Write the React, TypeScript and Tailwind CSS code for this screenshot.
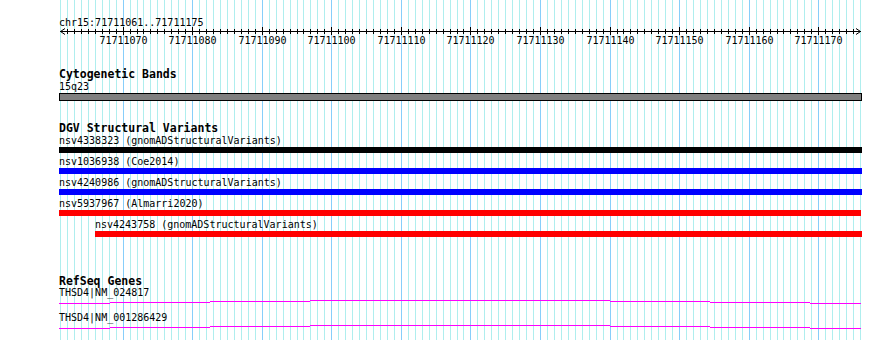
import React from "react";

const GX = (i: number) => Math.round(60 + (i * 800) / 115);

const mono = "font-['DejaVu_Sans_Mono',monospace]";

function Grid() {
  return (
    <svg className="absolute inset-0" width={890} height={340} shapeRendering="crispEdges">
      {Array.from({ length: 116 }, (_, i) => (
        <rect key={i} x={GX(i)} y={0} width={1} height={340} fill={i % 10 === 9 ? "#87cefa" : "#afeeee"} />
      ))}
    </svg>
  );
}

function Ruler() {
  const labels = [];
  for (let i = 9; i <= 115; i += 10) labels.push(i);
  return (
    <svg width={890} height={22} className="block">
      <g shapeRendering="crispEdges">
        <rect x={60} y={5} width={801} height={1} fill="#000" />
        {Array.from({ length: 114 }, (_, k) => k + 1).map((i) =>
          i % 10 === 9 ? (
            <rect key={i} x={GX(i)} y={1} width={1} height={8} fill="#000" />
          ) : (
            <rect key={i} x={GX(i)} y={3} width={1} height={5} fill="#000" />
          )
        )}
      </g>
      <polyline points="65,2.5 60.5,5.5 65,8.5" fill="none" stroke="#000" strokeWidth={1} />
      <polyline points="856,2.5 860.5,5.5 856,8.5" fill="none" stroke="#000" strokeWidth={1} />
      {labels.map((i) => (
        <text
          key={i}
          x={GX(i) + 0.5}
          y={17.5}
          textAnchor="middle"
          fontFamily="DejaVu Sans Mono, monospace"
          fontSize={10}
          fill="#000"
        >
          {71711061 + i}
        </text>
      ))}
    </svg>
  );
}

function Gene({ h }: { h: number }) {
  const segs: [number, number, number][] = [
    [59, 110, 5],
    [110, 210, 4],
    [210, 310, 3],
    [310, 610, 2],
    [610, 710, 3],
    [710, 810, 4],
    [810, 861, 5],
  ];
  return (
    <svg width={890} height={h} className="block" shapeRendering="crispEdges">
      {segs.map(([a, b, y], k) => (
        <rect key={k} x={a} y={y} width={b - a} height={1} fill="#ff00ff" />
      ))}
    </svg>
  );
}

function Header({ children, mt, h }: { children: React.ReactNode; mt: string; h: string }) {
  return (
    <div className={`${mono} ${mt} ${h} pl-[59px] text-[11.5px] leading-[13px] font-bold text-black whitespace-pre`}>
      {children}
    </div>
  );
}

function Feature({ label, color, left, width }: { label: string; color: string; left: string; width: string }) {
  return (
    <div className="mb-[2px]">
      <div className={`${mono} h-[13px] ${left === "ml-[95px]" ? "pl-[95px]" : "pl-[59px]"} text-[10px] leading-[13px] text-black whitespace-pre`}>
        {label}
      </div>
      <div className={`h-[6px] ${left} ${width} ${color}`} />
    </div>
  );
}

export default function App() {
  return (
    <div className="relative w-[890px] h-[340px] overflow-hidden bg-white">
      <Grid />
      <div className="relative flex flex-col pt-[16px]">
        <div className={`${mono} h-[10px] pl-[59px] text-[10px] leading-[13px] text-black whitespace-pre`}>
          chr15:71711061..71711175
        </div>
        <Ruler />

        <Header mt="mt-[20px]" h="h-[12px]">Cytogenetic Bands</Header>
        <div className={`${mono} h-[13px] pl-[59px] text-[10px] leading-[13px] text-black`}>15q23</div>
        <div className="h-[8px] ml-[59px] w-[803px] border border-black bg-[#808080]" />

        <Header mt="mt-[21px]" h="h-[12px]">DGV Structural Variants</Header>
        <Feature label="nsv4338323 (gnomADStructuralVariants)" color="bg-black" left="ml-[59px]" width="w-[803px]" />
        <Feature label="nsv1036938 (Coe2014)" color="bg-[#0000ff]" left="ml-[59px]" width="w-[803px]" />
        <Feature label="nsv4240986 (gnomADStructuralVariants)" color="bg-[#0000ff]" left="ml-[59px]" width="w-[803px]" />
        <Feature label="nsv5937967 (Almarri2020)" color="bg-[#ff0000]" left="ml-[59px]" width="w-[802px]" />
        <Feature label="nsv4243758 (gnomADStructuralVariants)" color="bg-[#ff0000]" left="ml-[95px]" width="w-[767px]" />

        <Header mt="mt-[36px]" h="h-[11px]">RefSeq Genes</Header>
        <div className={`${mono} h-[12px] pl-[59px] text-[10px] leading-[13px] text-black whitespace-pre`}>
          THSD4|NM_024817
        </div>
        <Gene h={13} />
        <div className={`${mono} h-[12px] pl-[59px] text-[10px] leading-[13px] text-black whitespace-pre`}>
          THSD4|NM_001286429
        </div>
        <Gene h={14} />
      </div>
    </div>
  );
}
